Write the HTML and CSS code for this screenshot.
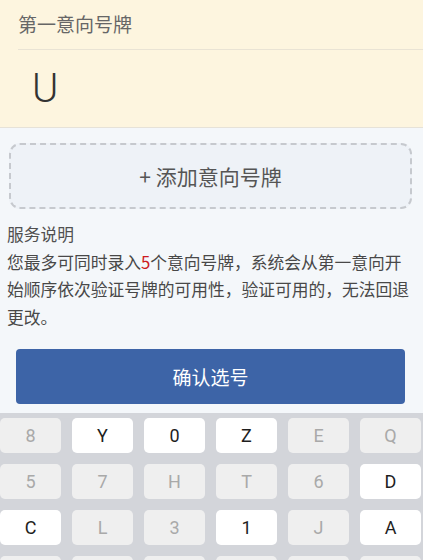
FILE: index.html
```html
<!DOCTYPE html>
<html lang="zh-CN">
<head>
<meta charset="utf-8">
<title>意向号牌</title>
<link rel="stylesheet" href="styles.css">
</head>
<body>
<div class="page">
  <section class="plate-card">
    <div class="plate-label">第一意向号牌</div>
    <div class="plate-value">U</div>
  </section>

  <div class="add-box">+ 添加意向号牌</div>

  <section class="notice">
    <div class="notice-title">服务说明</div>
    <p class="notice-text">您最多可同时录入<span class="hl">5</span>个意向号牌，系统会从第一意向开始顺序依次验证号牌的可用性，验证可用的，无法回退更改。</p>
  </section>

  <div class="confirm-wrap">
    <button class="confirm">确认选号</button>
  </div>

  <div class="keyboard">
    <div class="key off">8</div>
    <div class="key">Y</div>
    <div class="key">0</div>
    <div class="key">Z</div>
    <div class="key off">E</div>
    <div class="key off">Q</div>

    <div class="key off">5</div>
    <div class="key off">7</div>
    <div class="key off">H</div>
    <div class="key off">T</div>
    <div class="key off">6</div>
    <div class="key">D</div>

    <div class="key">C</div>
    <div class="key off">L</div>
    <div class="key off">3</div>
    <div class="key">1</div>
    <div class="key off">J</div>
    <div class="key">A</div>

    <div class="key off"></div>
    <div class="key off"></div>
    <div class="key off"></div>
    <div class="key off"></div>
    <div class="key off"></div>
    <div class="key off"></div>
  </div>
</div>
</body>
</html>
```

FILE: styles.css
```css
html, body {
  margin: 0;
  padding: 0;
}

body {
  width: 423px;
  height: 560px;
  overflow: hidden;
  background: #f4f7fa;
  font-family: Roboto, "Noto Sans CJK SC", sans-serif;
}

.page {
  display: flex;
  flex-direction: column;
}

.plate-card {
  background: #fdf5df;
  border-bottom: 1px solid #e6e2d8;
  height: 127px;
  padding-left: 18px;
  box-sizing: content-box;
  display: flex;
  flex-direction: column;
}

.plate-label {
  height: 49px;
  line-height: 47px;
  font-size: 19px;
  color: #666;
  border-bottom: 1px solid #e9e3d4;
  font-family: "Noto Sans CJK SC", sans-serif;
}

.plate-value {
  flex: 1;
  display: flex;
  align-items: center;
  padding-left: 14px;
  font-size: 40px;
  font-weight: 300;
  color: #333;
  font-family: Roboto, sans-serif;
}

.add-box {
  margin: 15px 11px 0 9px;
  height: 62px;
  border: 2px dashed #c6c9ce;
  border-radius: 11px;
  background: #eef2f7;
  display: flex;
  align-items: center;
  justify-content: center;
  font-size: 21px;
  color: #555;
  font-family: "Noto Sans CJK SC", sans-serif;
}

.notice {
  margin-top: 12px;
  padding: 0 7px;
  font-size: 16.75px;
  line-height: 27.5px;
  color: #484848;
  font-family: "Noto Sans CJK SC", sans-serif;
}

.notice-title {
  color: #505050;
}

.notice-text {
  margin: 0;
}

.hl {
  color: #cc1b1f;
}

.confirm-wrap {
  padding: 18px 18px 9px 16px;
}

.confirm {
  display: block;
  width: 100%;
  height: 55px;
  border: none;
  border-radius: 4px;
  background: #3d64a7;
  color: #fff;
  font-size: 19px;
  font-family: "Noto Sans CJK SC", sans-serif;
  padding: 0;
}

.keyboard {
  background: #d3d5da;
  padding: 5px 2px 10px 0;
  display: grid;
  grid-template-columns: repeat(6, 61px);
  grid-auto-rows: 35px;
  column-gap: 11px;
  row-gap: 11px;
}

.key {
  background: #ffffff;
  border-radius: 5px;
  display: flex;
  align-items: center;
  justify-content: center;
  font-size: 18px;
  color: #1e1e1e;
  font-family: Roboto, sans-serif;
}

.key.off {
  background: #efefef;
  color: #a9a9a9;
}
```
